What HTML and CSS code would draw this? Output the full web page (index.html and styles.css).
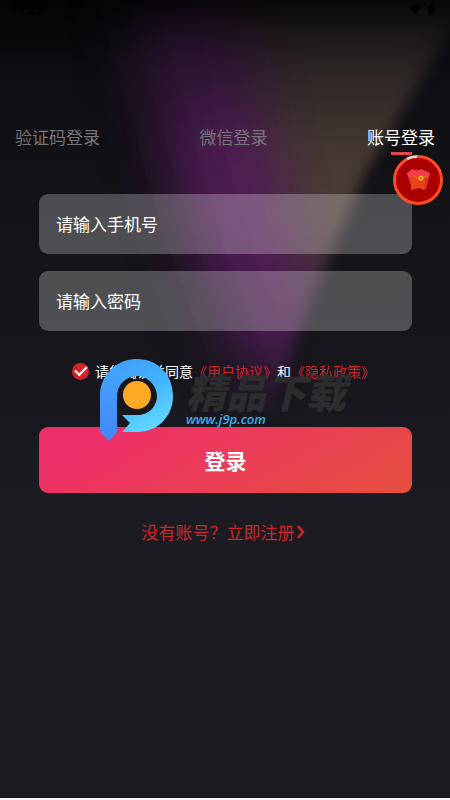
FILE: index.html
```html
<!DOCTYPE html>
<html lang="zh-CN">
<head>
<meta charset="utf-8">
<meta name="viewport" content="width=device-width, initial-scale=1">
<title>账号登录</title>
<link rel="stylesheet" href="styles.css">
</head>
<body>
<div class="screen">
  <svg class="glow" viewBox="0 0 450 450" preserveAspectRatio="none" aria-hidden="true">
    <defs>
      <filter id="soft" filterUnits="userSpaceOnUse" x="-100" y="-150" width="700" height="750"><feGaussianBlur stdDeviation="30"/></filter>
      <filter id="edge" filterUnits="userSpaceOnUse" x="-100" y="-100" width="650" height="650"><feGaussianBlur stdDeviation="7"/></filter>
      <linearGradient id="fade" gradientUnits="userSpaceOnUse" x1="0" y1="0" x2="0" y2="430">
        <stop offset="0" stop-color="#fff" stop-opacity=".08"/>
        <stop offset=".12" stop-color="#fff" stop-opacity=".4"/>
        <stop offset=".35" stop-color="#fff" stop-opacity=".9"/>
        <stop offset=".5" stop-color="#fff"/>
        <stop offset=".78" stop-color="#fff" stop-opacity=".8"/>
        <stop offset="1" stop-color="#fff" stop-opacity="0"/>
      </linearGradient>
      <mask id="beam" maskUnits="userSpaceOnUse" x="0" y="0" width="450" height="450">
        <path d="M-40-40H500L440 50 367 169 300 327 265 450H-40Z" fill="url(#fade)" filter="url(#edge)"/>
      </mask>
    </defs>
    <g mask="url(#beam)">
      <path d="M110-60H300L350 180 330 420 260 420 190 230Z" fill="#521a58" filter="url(#soft)"/>
      <path d="M230-80H500L430 180 340 330 310 270 275 160Z" fill="#4b3c34" filter="url(#soft)"/>
    </g>
  </svg>
  <header class="status">
    <span>11:23</span>
    <svg width="30" height="12" viewBox="0 0 30 12" aria-hidden="true"><path d="M0 3Q6-1 12 3L6 10ZM19 2h2V0h3v2h1v9h-6Z"/></svg>
  </header>
  <main>
    <nav class="tabs">
      <button type="button">验证码登录</button>
      <button type="button">微信登录</button>
      <button type="button" class="active">账号登录</button>
    </nav>
    <form class="form">
      <input class="field" type="tel" placeholder="请输入手机号" aria-label="手机号">
      <input class="field" type="password" placeholder="请输入密码" aria-label="密码">
      <div class="agree">
        <input id="agree" type="checkbox" checked>
        <label for="agree">请您阅读并同意</label><a href="#">《用户协议》</a><span>和</span><a href="#">《隐私政策》</a>
      </div>
      <button class="submit" type="button">登录</button>
    </form>
    <a class="register" href="#">没有账号？立即注册<svg width="8" height="14" viewBox="0 0 8 14" aria-hidden="true"><path d="M1 1 6 7 1 13"/></svg></a>
  </main>
  <svg class="packet" viewBox="0 0 50 50" aria-hidden="true">
    <circle cx="25" cy="25" r="23.5" fill="#a90000" stroke="#ff4b26" stroke-width="3"/>
    <path d="M14 4Q18 1.500 24 1.500" fill="none" stroke="#ddd" stroke-width="2.500"/>
    <path d="M14 18 24 14 29 32 19 34Z" fill="#e5303f"/>
    <path d="M25 15 37 18 33 35 22 31Z" fill="#d92e37"/>
    <path d="M14 18 19 14 24 16 28 14 37 18 35 23 28 24 16 23Z" fill="#f33c4e"/>
    <path d="M19 20 33 21 31 35 26 33 18 35Z" fill="#e64710"/>
    <path d="M19 20 27 24 33 21" fill="none" stroke="#fa6630"/>
    <circle cx="28" cy="23" r="2.500" fill="#f5bd39"/><circle cx="28" cy="23" r="1" fill="#a94d10"/>
  </svg>
  <div class="watermark">
    <svg class="logo" viewBox="0 0 74 82" aria-hidden="true">
      <defs>
        <linearGradient id="ring" x1=".2" y1="0" x2=".7" y2="1"><stop offset="0" stop-color="#449cfa"/><stop offset=".45" stop-color="#40b2fc"/><stop offset="1" stop-color="#64d9ff"/></linearGradient>
        <linearGradient id="stem" x1="0" y1="0" x2="0" y2="1"><stop offset="0" stop-color="#43a4fb"/><stop offset="1" stop-color="#4485f7"/></linearGradient>
      </defs>
      <path d="M0 36A36 36 0 0 1 37 0C58 0 73 16 73 37S57 73 37 73H22L30 64 22 56H38C49 56 57 47 57 37S48 17 37 17 17 26 17 37Z" fill="url(#ring)"/>
      <path d="M0 36Q1 20 12 10L23 22Q17 28 17 37V73L9 82 0 73Z" fill="url(#stem)"/>
      <circle cx="37" cy="36" r="14" fill="#ffaa25"/>
    </svg>
    <div class="brand"><strong>精品下载</strong><span>www.j9p.com</span></div>
  </div>
</div>
</body>
</html>
```
FILE: styles.css
```css
* { box-sizing: border-box; }
body {
  margin: 0;
  background: #f4f4f6;
  color: #fff;
  font-family: "Noto Sans CJK SC", sans-serif;
}
button, input { font: inherit; color: inherit; }
button { border: 0; padding: 0; background: none; }
a { color: #c9282d; text-decoration: none; }
.screen {
  position: relative;
  min-height: calc(100vh - 2px);
  overflow: hidden;
  background: linear-gradient(#030304, #0d0d12 70px, #121217 200px, #18171d 400px, #1c1b21 500px);
}
.glow { position: absolute; top: 0; left: 0; width: 100%; height: 450px; }
.status {
  position: relative;
  display: flex;
  justify-content: space-between;
  height: 20px;
  padding: 4px 11px 0 12px;
  color: #000;
  font: 12px/12px Roboto, sans-serif;
}
main { position: relative; padding-top: 105px; }
.tabs { display: flex; justify-content: space-between; padding: 0 15px; }
.tabs button { position: relative; height: 24px; color: #777578; font-size: 17px; line-height: 24px; }
.tabs .active { color: #fff; }
.active::after {
  content: "";
  position: absolute;
  top: 27px;
  left: 50%;
  width: 21px;
  height: 3px;
  margin-left: -10px;
  background: #e34651;
}
.form { display: flex; flex-direction: column; margin: 45px 38px 0 39px; }
.field {
  width: 100%;
  height: 60px;
  margin-bottom: 17px;
  padding: 0 17px 2px;
  border: 0;
  border-radius: 9px;
  outline: 0;
  background: rgb(255 255 255 / 25%);
  font-size: 17px;
}
.field::placeholder { color: #fff; opacity: 1; }
.agree {
  display: flex;
  align-items: center;
  justify-content: center;
  height: 20px;
  margin: 13px 0 46px;
  padding-right: 4px;
  font-size: 14px;
  line-height: 20px;
}
.agree input {
  appearance: none;
  display: grid;
  place-items: center;
  width: 17px;
  height: 17px;
  margin: 0 6px 0 0;
  border-radius: 50%;
  background: #d2252b;
}
.agree input::before {
  content: "";
  width: 10px;
  height: 5px;
  margin-bottom: 3px;
  border: solid #fff;
  border-width: 0 0 2px 2px;
  transform: rotate(-45deg);
}
.submit {
  height: 66px;
  border-radius: 9px;
  background: linear-gradient(150deg, #ee2e69 15%, #e94250 65%, #e5503e);
  font-size: 21px;
  line-height: 64px;
  font-weight: 700;
}
.register {
  display: flex;
  align-items: center;
  justify-content: center;
  gap: 2px;
  margin: 27px 4px 0 0;
  font-size: 17px;
  line-height: 24px;
}
.register path { fill: none; stroke: #d2252b; stroke-width: 2.5; }
.packet { position: absolute; top: 155px; right: 7px; width: 50px; height: 50px; }
.watermark {
  position: absolute;
  top: 359px;
  left: 100px;
  display: flex;
  gap: 12px;
  pointer-events: none;
}
.logo { width: 74px; height: 82px; }
.brand { display: flex; flex-direction: column; padding-top: 11px; font-style: italic; }
.brand strong { color: #2b2c2d; font-size: 40px; line-height: 42px; font-weight: 900; }
.brand span { color: #35aef0; font: italic 600 13px/14px "Open Sans", sans-serif; }
```
